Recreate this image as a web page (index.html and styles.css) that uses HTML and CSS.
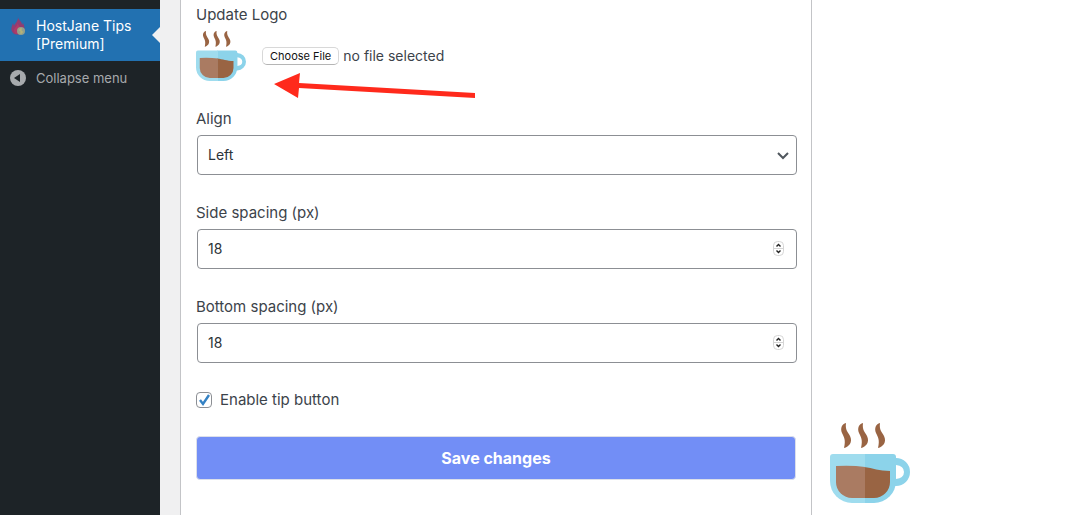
FILE: index.html
```
<!DOCTYPE html>
<html lang="en">
<head>
  <meta charset="UTF-8">
  <title>HostJane Tips</title>
  <meta name="viewport" content="width=device-width, initial-scale=1.0">
  <link rel="stylesheet" href="styles.css">
</head>
<body>
  <svg class="defs" aria-hidden="true">
    <symbol id="coffee" viewBox="0 0 80 80">
      <path fill="#8cd3ea" fill-rule="evenodd" d="M64 35h2a14 14 0 1 1 0 28h-2zM66 42v14q8-1 8-7t-8-7z"/>
      <path fill="#8cd3ea" d="M34 31h29q3 0 3 3v24a22 22 0 0 1-22 22H34z"/>
      <path fill="#9fdcee" d="M35 31H3q-3 0-3 3v24a22 22 0 0 0 22 22h13z"/>
      <path fill="#996443" d="M34 44c9 1 15 4 26 4v11a16 16 0 0 1-16 16H34z"/>
      <path fill="#aa7b62" d="M6 43q16-1 29 1v31H22A16 16 0 0 1 6 59z"/>
      <path id="steam" fill="#996443" d="M16 0c-4 1-6 5-4 10 2 4 4 7 2 15 5-1 9-6 6-12-2-4-5-6-4-13z"/>
      <use href="#steam" x="17"/>
      <use href="#steam" x="34"/>
    </symbol>
    <symbol id="stepper" viewBox="0 0 11 15">
      <rect x="0.5" y="0.5" width="10" height="14" rx="4" fill="#fff" stroke="#d5d5d5"/>
      <path d="M1 7.5h9" stroke="#d5d5d5"/>
      <path d="M3.5 5.5l2-2 2 2M3.5 9.5l2 2 2-2" fill="none" stroke="#222" stroke-width="1.4"/>
    </symbol>
  </svg>

  <nav class="sidebar">
    <a class="menu-item current" href="#">
      <svg class="menu-icon" viewBox="0 0 16 20">
        <path fill="#923d70" d="M8 0c0 3 4 4 4 8l1-2c2 4 2 8 0 10-3 2-8 2-10 0-2-2-2-5-1-7l1-3 1 3C5 6 8 5 8 0z"/>
        <path fill="#b03a68" d="M8 6c0 3 3 4 3 7s-2 4-4 4-3-2-3-4 3-3 4-7z"/>
        <circle cx="11" cy="14" r="4" fill="#93a08c"/>
        <path d="M12 12h-2v2h2v2h-2" fill="none" stroke="#c2b96f"/>
      </svg>
      <span>HostJane Tips [Premium]</span>
    </a>
    <button class="menu-item collapse" type="button">
      <svg class="menu-icon" viewBox="0 0 16 16">
        <circle cx="8" cy="8" r="8" fill="#a7aaad"/>
        <path d="M10 4v8L4 8z" fill="#1d2327"/>
      </svg>
      <span>Collapse menu</span>
    </button>
  </nav>

  <main class="content">
    <form class="panel">
      <div class="field">
        <label for="logo">Update Logo</label>
        <div class="upload">
          <svg class="logo"><use href="#coffee"/></svg>
          <input class="file-input" type="file" id="logo">
          <label class="file-button" for="logo">Choose File</label>
          <span class="file-name">no file selected</span>
          <svg class="arrow" viewBox="0 0 202 26" aria-hidden="true">
            <path fill="#ff2a1c" d="M0 11L26 0l-1 10 176 10v5L25 15l-1 10z"/>
          </svg>
        </div>
      </div>
      <div class="field">
        <label for="align">Align</label>
        <div class="control">
          <select id="align">
            <option>Left</option>
            <option>Right</option>
          </select>
          <svg class="chevron" viewBox="0 0 12 8"><path d="M1 1l5 5 5-5" fill="none" stroke="#50575e" stroke-width="2"/></svg>
        </div>
      </div>
      <div class="field">
        <label for="side">Side spacing (px)</label>
        <div class="control">
          <input type="number" id="side" value="18">
          <svg class="stepper"><use href="#stepper"/></svg>
        </div>
      </div>
      <div class="field">
        <label for="bottom">Bottom spacing (px)</label>
        <div class="control">
          <input type="number" id="bottom" value="18">
          <svg class="stepper"><use href="#stepper"/></svg>
        </div>
      </div>
      <div class="check">
        <input type="checkbox" id="enable" checked>
        <label for="enable">Enable tip button</label>
      </div>
      <button class="save" type="submit">Save changes</button>
    </form>
  </main>

  <a class="tip-button" href="#" aria-label="Tip"><svg><use href="#coffee"/></svg></a>
</body>
</html>
```
FILE: styles.css
```
* {
  box-sizing: border-box;
}

body {
  margin: 0;
  min-height: 100vh;
  display: flex;
  background: #fff;
  color: #3c434a;
  font-family: Inter, "Liberation Sans", sans-serif;
  font-size: 15px;
  line-height: 24px;
}

.defs {
  position: absolute;
  width: 0;
  height: 0;
}

.sidebar {
  width: 160px;
  flex-shrink: 0;
  padding-top: 9px;
  background: #1d2327;
}

.menu-item {
  display: flex;
  gap: 10px;
  width: 100%;
  padding: 8px 10px;
  font-family: inherit;
  font-size: 13px;
  line-height: 18px;
  text-align: left;
  text-decoration: none;
}

.menu-icon {
  width: 16px;
  height: 20px;
  flex-shrink: 0;
}

.current {
  position: relative;
  background: #2271b1;
  color: #fff;
  font-size: 14px;
}

/* notch pointing at the open page */
.current::after {
  content: "";
  position: absolute;
  right: 0;
  top: 18px;
  border: 8px solid transparent;
  border-left: 0;
  border-right-color: #f0f0f1;
}

.collapse {
  align-items: center;
  border: 0;
  background: none;
  color: #a7aaad;
}

.collapse .menu-icon {
  height: 16px;
}

.content {
  width: 652px;
  padding-left: 20px;
  display: flex;
  background: #f0f0f1;
}

.panel {
  flex: 1;
  padding: 3px 15px;
  background: #fff;
  border: solid #c3c4c7;
  border-width: 0 1px;
}

.field {
  display: flex;
  flex-direction: column;
  gap: 4px;
  margin-bottom: 26px;
}

.control {
  position: relative;
  margin: 0 -1px 0 1px;
}

select,
input[type="number"] {
  display: block;
  width: 100%;
  height: 40px;
  padding: 0 10px 2px;
  border: 1px solid #8c8f94;
  border-radius: 4px;
  background: #fff;
  color: #2c3338;
  font-family: inherit;
  font-size: 14px;
  appearance: none;
}

input[type="number"]::-webkit-inner-spin-button {
  appearance: none;
}

.chevron,
.stepper {
  position: absolute;
  pointer-events: none;
}

.chevron {
  right: 8px;
  top: 17px;
  width: 12px;
  height: 8px;
}

.stepper {
  right: 13px;
  top: 12px;
  width: 11px;
  height: 15px;
}

.upload {
  position: relative;
  display: flex;
  align-items: center;
  height: 50px;
}

.logo {
  width: 50px;
  height: 50px;
  margin-right: 16px;
}

.file-input {
  position: absolute;
  width: 1px;
  height: 1px;
  opacity: 0;
}

.file-button {
  padding: 0 7px;
  border: 1px solid #d8d8d8;
  border-bottom-color: #b5b5b5;
  border-radius: 5px;
  background: #fff;
  color: #111;
  font-size: 11px;
  line-height: 16px;
}

.file-name {
  margin-left: 4px;
  font-size: 14px;
}

.arrow {
  position: absolute;
  left: 78px;
  top: 42px;
  width: 202px;
  height: 26px;
}

.check {
  display: flex;
  align-items: center;
  gap: 8px;
  height: 22px;
  margin-bottom: 25px;
}

.check input {
  width: 16px;
  height: 16px;
  margin: 0;
  border: 1px solid #8c8f94;
  border-radius: 4px;
  background: #fff;
  appearance: none;
}

.check input:checked {
  background: url("data:image/svg+xml,%3Csvg xmlns='http://www.w3.org/2000/svg' viewBox='0 0 14 14'%3E%3Cpath d='M3 7l3 4 6-9' fill='none' stroke='%233582c4' stroke-width='2.4'/%3E%3C/svg%3E") center / 14px no-repeat;
}

.save {
  display: block;
  width: 100%;
  height: 44px;
  border: 1px solid #dcdfea;
  border-radius: 4px;
  background: #728ef6;
  color: #fff;
  font-family: inherit;
  font-size: 16px;
  font-weight: 700;
}

.tip-button {
  position: fixed;
  left: 830px;
  bottom: 12px;
  width: 80px;
  height: 80px;
}

.tip-button svg {
  display: block;
  width: 80px;
  height: 80px;
}
```
